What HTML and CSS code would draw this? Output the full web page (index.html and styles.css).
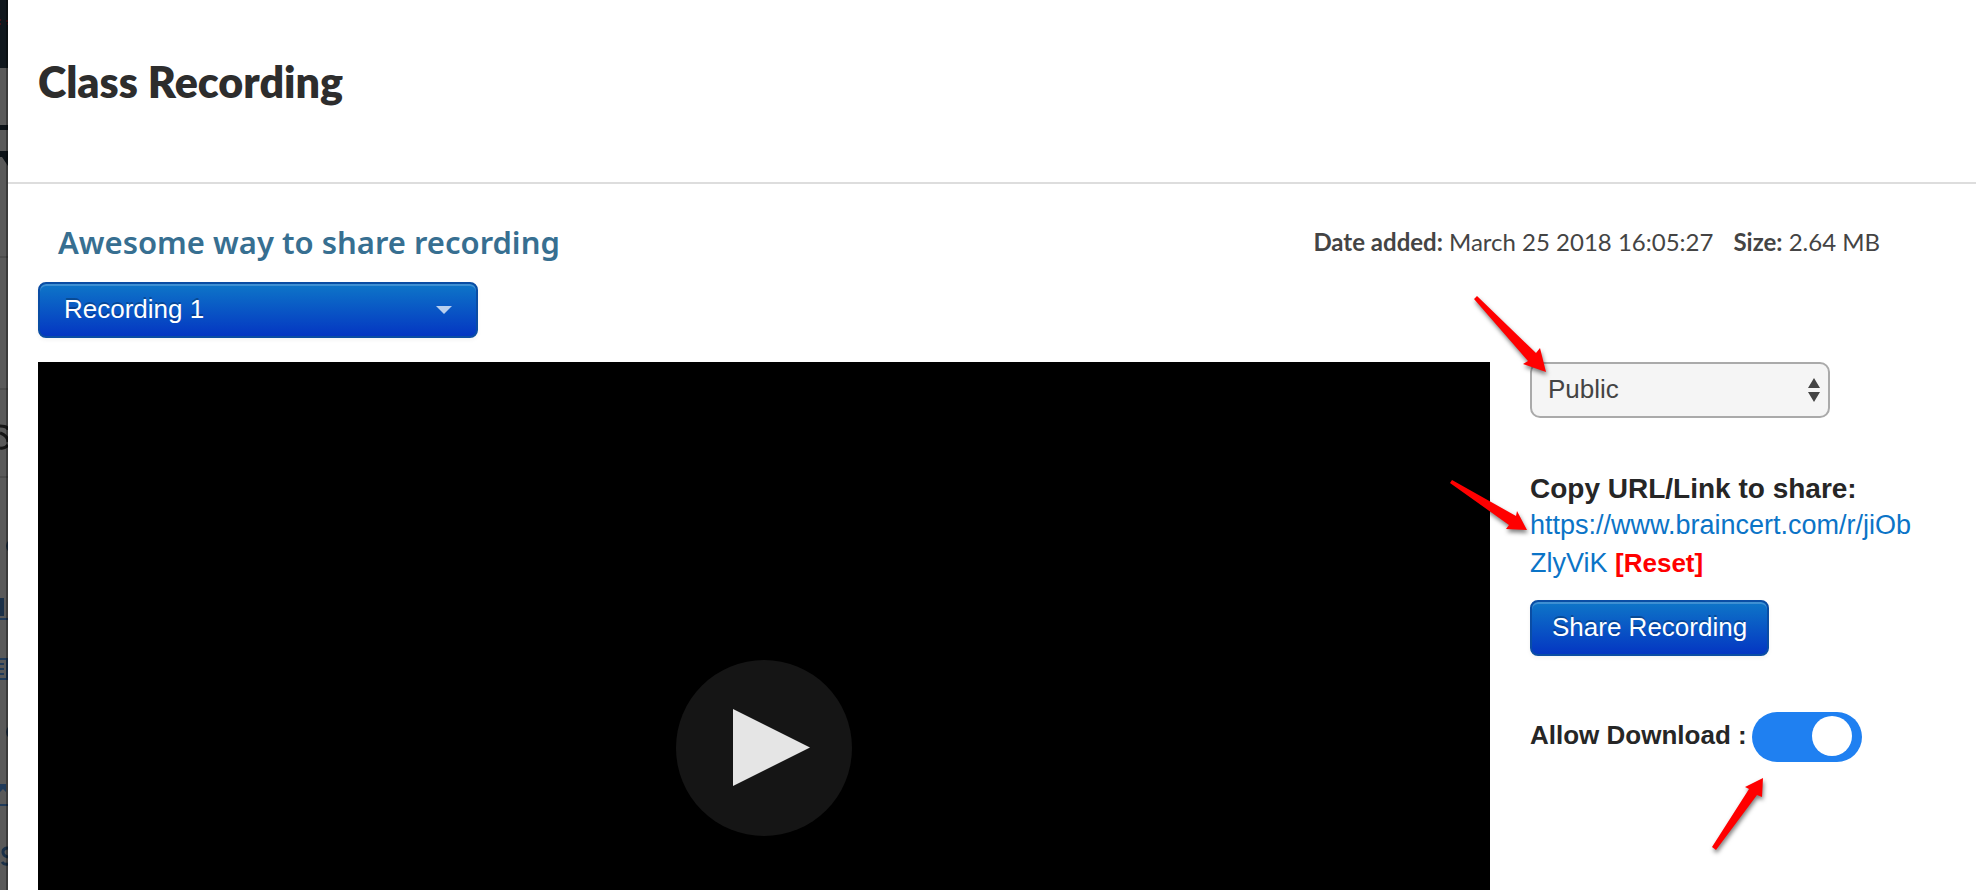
FILE: index.html
```html
<!DOCTYPE html>
<html lang="en">
<head>
  <meta charset="UTF-8">
  <title>Class Recording</title>
  <link rel="stylesheet" href="styles.css">
</head>
<body>
  <div class="page-edge">
    <svg width="8" height="890" viewBox="0 0 8 890" aria-hidden="true">
      <rect width="8" height="68" fill="#10171d"/>
      <path d="M0 19h1v2H0zM0 23h1v2H0zM6 20h2v2H6zM7 23h1v2H7z" fill="#4a1218"/>
      <rect y="125" width="8" height="5" fill="#0d1318"/>
      <path d="M0 151h8v15l-6-9H0z" fill="#0d1318"/>
      <path d="M0 257h8M0 389h8M0 477h8" stroke="#4c4c4c" stroke-width="2"/>
      <path d="M0 426q8 0 8 4M0 433q8 3 8 9M0 448q5 1 8-3" fill="none" stroke="#161616" stroke-width="3"/>
      <circle cx="13" cy="546" r="7" fill="#1a2d42"/>
      <rect y="598" width="4" height="18" fill="#1a3048"/>
      <rect y="618" width="8" height="2" fill="#1f3a5a"/>
      <path d="M0 659h7v20H0M0 664h4M0 669h4M0 674h4" fill="none" stroke="#1f3a5a" stroke-width="2"/>
      <circle cx="13" cy="732" r="7" fill="#1a2d42"/>
      <path d="M0 784h6v8l-3-3-3 3z" fill="#1f3a5a"/>
      <rect y="804" width="8" height="2" fill="#1f3a5a"/>
      <path d="M8 848q-5 0-5 4t5 5M2 862q2 3 6 2" fill="none" stroke="#1a3048" stroke-width="3"/>
    </svg>
  </div>

  <main class="modal">
    <header class="modal-header">
      <h1>Class Recording</h1>
    </header>

    <div class="modal-body">
      <div class="info">
        <h2>Awesome way to share recording</h2>
        <div class="meta">
          <span><b>Date added:</b> March 25 2018 16:05:27</span>
          <span><b>Size:</b> 2.64 MB</span>
        </div>
      </div>

      <div class="recording-picker">
        <select class="btn" aria-label="Recording">
          <option>Recording 1</option>
        </select>
        <svg class="caret" width="16" height="8" viewBox="0 0 16 8"><path d="M0 0h16L8 8z" fill="#b9cfef"/></svg>
      </div>

      <div class="columns">
        <div class="video">
          <button class="play" aria-label="Play">
            <svg width="176" height="176" viewBox="0 0 176 176"><path d="M57 49l77 38.500-77 38.500z" fill="#e5e5e5"/></svg>
          </button>
        </div>

        <div class="side">
          <div class="access">
            <select aria-label="Access">
              <option>Public</option>
            </select>
            <svg class="updown" width="12" height="24" viewBox="0 0 12 24"><path d="M6 0l6 10H0zM0 14h12L6 24z" fill="#444"/></svg>
            <svg class="arrow arrow-access" width="80" height="84" viewBox="0 0 80 84"><path d="M6 3L65 60 69 55 75 79 52 71 57 68 3 6z" fill="red"/></svg>
          </div>

          <div class="share">
            <h3>Copy URL/Link to share:</h3>
            <div class="link">
              <a href="https://www.braincert.com/r/jiObZlyViK">https://www.braincert.com/r/jiOb<br>ZlyViK</a>
              <a class="reset" href="#">[Reset]</a>
            </div>
            <svg class="arrow arrow-link" width="84" height="60" viewBox="0 0 84 60"><path d="M4 2L68 38 69 33 79 52 58 51 61 47 2 5z" fill="red"/></svg>
            <button class="btn">Share Recording</button>
          </div>

          <div class="download">
            <label for="allow-download">Allow Download :</label>
            <input type="checkbox" id="allow-download" class="toggle" checked>
            <svg class="arrow arrow-download" width="60" height="80" viewBox="0 0 60 80"><path d="M53 2L52 21 47 19 6 74 2 71 39 13 35 11z" fill="red"/></svg>
          </div>
        </div>
      </div>
    </div>
  </main>
</body>
</html>
```
FILE: styles.css
```css
* {
  margin: 0;
  padding: 0;
  box-sizing: border-box;
}

body {
  font-family: "Liberation Sans", Arial, sans-serif;
  font-size: 26px;
  color: #262626;
  background: #fff;
  height: 100vh;
  display: flex;
}

.page-edge {
  position: relative;
  width: 8px;
  flex: none;
  background: #595959;
  overflow: hidden;
}

/* shadow of the modal on the page behind it */
.page-edge::after {
  content: "";
  position: absolute;
  inset: 0 0 0 auto;
  width: 2px;
  background: rgba(0, 0, 0, 0.35);
}

.page-edge svg {
  display: block;
}

.modal {
  flex: 1;
  display: flex;
  flex-direction: column;
  overflow: hidden;
}

.modal-header {
  padding: 54px 30px 72px;
  border-bottom: 2px solid #ddd;
}

.modal-header h1 {
  font-family: Lato, sans-serif;
  font-size: 43px;
  line-height: 56px;
  font-weight: 800;
  color: #2d2d2d;
}

.modal-body {
  flex: 1;
  min-height: 0;
  display: flex;
  flex-direction: column;
  padding: 38px 0 0 30px;
}

.info {
  display: flex;
  justify-content: space-between;
  align-items: center;
  padding: 0 96px 0 20px;
  margin-bottom: 20px;
  line-height: 40px;
}

.info h2 {
  font-family: "Noto Sans", sans-serif;
  font-size: 31px;
  font-weight: 600;
  color: #376f91;
}

.meta {
  display: flex;
  gap: 20px;
  font-family: Lato, sans-serif;
  font-size: 24px;
  color: #444;
}

.btn {
  height: 56px;
  padding: 0 20px 2px;
  font: inherit;
  color: #fff;
  text-shadow: 0 -2px 0 rgba(0, 0, 0, 0.25);
  background: linear-gradient(#0e76c8, #0436c2);
  border: 2px solid #0a4da4;
  border-radius: 8px;
  box-shadow: inset 0 2px 0 rgba(255, 255, 255, 0.2), 0 2px 4px rgba(0, 0, 0, 0.05);
  cursor: pointer;
}

select {
  appearance: none;
}

.recording-picker {
  position: relative;
  width: 440px;
  margin-bottom: 24px;
}

.recording-picker .btn {
  display: block;
  width: 100%;
  padding: 0 24px 2px;
}

.caret {
  position: absolute;
  right: 26px;
  top: 24px;
  pointer-events: none;
}

.columns {
  flex: 1;
  min-height: 0;
  display: flex;
  gap: 40px;
}

.video {
  flex: 1;
  background: #000;
  display: flex;
  justify-content: center;
  padding-top: 298px;
}

.play {
  width: 176px;
  height: 176px;
  border: none;
  border-radius: 50%;
  background: #151515;
  cursor: pointer;
}

.play svg {
  display: block;
}

.side {
  width: 390px;
  margin-right: 56px;
}

.access {
  position: relative;
  width: 300px;
  margin-bottom: 54px;
}

.access select {
  display: block;
  width: 100%;
  height: 56px;
  padding: 0 16px 2px;
  font: inherit;
  color: #444;
  background: #f5f5f5;
  border: 2px solid #aaa;
  border-radius: 10px;
}

.updown {
  position: absolute;
  right: 10px;
  top: 16px;
  pointer-events: none;
}

/* Pointer arrows */
.arrow {
  position: absolute;
  overflow: visible;
  pointer-events: none;
  filter: drop-shadow(1px 3px 2px rgba(0, 0, 0, 0.5));
}

.arrow-access {
  left: -59px;
  top: -69px;
}

.arrow-link {
  left: -82px;
  top: 6px;
}

.arrow-download {
  left: 180px;
  top: 64px;
}

.share {
  position: relative;
  margin-bottom: 56px;
}

.share h3 {
  font-size: 28px;
  line-height: 34px;
}

.link {
  font-size: 27px;
  line-height: 38px;
  margin-bottom: 18px;
}

.link a {
  color: #0b74c7;
  text-decoration: none;
}

.link .reset {
  font-size: 26px;
  font-weight: bold;
  color: red;
}

.download {
  position: relative;
  display: flex;
  align-items: center;
  gap: 5px;
  font-weight: bold;
}

.download label {
  padding-bottom: 4px;
}

.toggle {
  appearance: none;
  width: 110px;
  height: 50px;
  padding: 4px 10px;
  border-radius: 25px;
  background: #bbb;
  display: flex;
  cursor: pointer;
}

.toggle::before {
  content: "";
  width: 40px;
  height: 40px;
  border-radius: 50%;
  background: #fff;
}

.toggle:checked {
  background: #1f80f1;
  justify-content: flex-end;
}
```
